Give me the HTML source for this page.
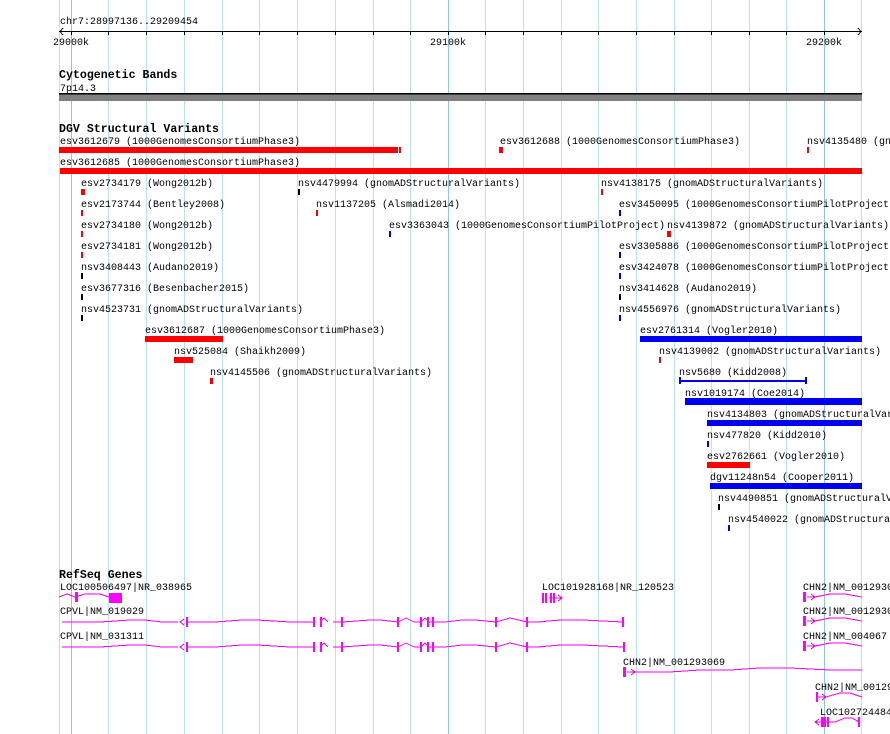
<!DOCTYPE html>
<html><head><meta charset="utf-8"><style>
html,body{margin:0;padding:0;background:#fff;width:890px;height:734px;overflow:hidden}
svg text{font-family:"Liberation Mono",monospace;font-size:10px;fill:#000}
svg text.h{font-weight:bold;font-size:11.6px}
</style></head><body>
<svg width="890" height="734" xmlns="http://www.w3.org/2000/svg" shape-rendering="crispEdges">
<g stroke="#b4e6ee" stroke-width="1">
<line x1="59.5" y1="0" x2="59.5" y2="734"/>
<line x1="108.5" y1="0" x2="108.5" y2="734"/><line x1="146.5" y1="0" x2="146.5" y2="734"/><line x1="184.5" y1="0" x2="184.5" y2="734"/><line x1="222.5" y1="0" x2="222.5" y2="734"/><line x1="259.5" y1="0" x2="259.5" y2="734"/><line x1="297.5" y1="0" x2="297.5" y2="734"/><line x1="335.5" y1="0" x2="335.5" y2="734"/><line x1="373.5" y1="0" x2="373.5" y2="734"/><line x1="410.5" y1="0" x2="410.5" y2="734"/>
<line x1="485.5" y1="0" x2="485.5" y2="734"/><line x1="523.5" y1="0" x2="523.5" y2="734"/><line x1="561.5" y1="0" x2="561.5" y2="734"/><line x1="598.5" y1="0" x2="598.5" y2="734"/><line x1="636.5" y1="0" x2="636.5" y2="734"/><line x1="674.5" y1="0" x2="674.5" y2="734"/><line x1="711.5" y1="0" x2="711.5" y2="734"/><line x1="749.5" y1="0" x2="749.5" y2="734"/><line x1="786.5" y1="0" x2="786.5" y2="734"/><line x1="861.5" y1="0" x2="861.5" y2="734"/>
</g>
<g stroke="#88c8e4"><line x1="71.5" y1="0" x2="71.5" y2="734"/><line x1="448.5" y1="0" x2="448.5" y2="734"/><line x1="824.5" y1="0" x2="824.5" y2="734"/></g>

<text x="60" y="24">chr7:28997136..29209454</text>
<g stroke="#000"><line x1="59" y1="31.5" x2="862" y2="31.5"/>
<polyline points="63,28 60,31.5 63,35" fill="none"/><polyline points="858,28 861,31.5 858,35" fill="none"/>
<path d="M71.5 31v4M108.5 31v4M146.5 31v4M184.5 31v4M222.5 31v4M259.5 31v4M297.5 31v4M335.5 31v4M373.5 31v4M410.5 31v4M448.5 31v4M485.5 31v4M523.5 31v4M561.5 31v4M598.5 31v4M636.5 31v4M674.5 31v4M711.5 31v4M749.5 31v4M786.5 31v4M824.5 31v4"/></g>
<text x="53" y="45">29000k</text><text x="430" y="45">29100k</text><text x="806" y="45">29200k</text>

<text class="h" x="59" y="78">Cytogenetic Bands</text>
<text x="60" y="91">7p14.3</text>
<rect x="59" y="93" width="803" height="8" fill="#808080"/><rect x="59" y="93" width="803" height="1.5" fill="#000"/>

<text class="h" x="59" y="132">DGV Structural Variants</text>
<g fill="#f00">
<rect x="59" y="147" width="339" height="6"/><rect x="399" y="147" width="2" height="6"/>
<rect x="499" y="147" width="4" height="6"/><rect x="807" y="147" width="2" height="6"/>
<rect x="60" y="168" width="802" height="6"/>
<rect x="81" y="189" width="4" height="6"/><rect x="601" y="189" width="2" height="6"/>
<rect x="81" y="210" width="2" height="6"/><rect x="316" y="210" width="2" height="6"/>
<rect x="81" y="231" width="2" height="6"/><rect x="667" y="231" width="4" height="6"/>
<rect x="81" y="252" width="2" height="6"/>
<rect x="145" y="336" width="78" height="6"/>
<rect x="174" y="357" width="19" height="6"/><rect x="659" y="357" width="2" height="6"/>
<rect x="210" y="378" width="3" height="6"/>
<rect x="707" y="462" width="43" height="6"/>
</g>
<g fill="#000">
<rect x="298" y="189" width="2" height="6"/><rect x="81" y="273" width="2" height="6"/><rect x="81" y="294" width="2" height="6"/><rect x="619" y="294" width="2" height="6"/><rect x="81" y="315" width="2" height="6"/><rect x="718" y="504" width="2" height="6"/>
</g>
<g fill="#0000f0">
<rect x="619" y="210" width="2" height="6"/><rect x="389" y="231" width="2" height="6"/><rect x="619" y="252" width="2" height="6"/><rect x="619" y="273" width="2" height="6"/><rect x="619" y="315" width="2" height="6"/>
<rect x="640" y="336" width="222" height="6"/>
<rect x="679" y="380" width="127" height="2"/><rect x="679" y="377" width="2" height="7"/><rect x="805" y="377" width="2" height="7"/>
<rect x="685" y="398" width="177" height="7"/>
<rect x="707" y="420" width="155" height="6"/>
<rect x="707" y="441" width="2" height="6"/>
<rect x="710" y="483" width="152" height="6"/>
<rect x="728" y="525" width="2" height="6"/>
</g>
<text x="60" y="144">esv3612679 (1000GenomesConsortiumPhase3)</text>
<text x="500" y="144">esv3612688 (1000GenomesConsortiumPhase3)</text>
<text x="807" y="144">nsv4135480 (gnomADStructuralVariants)</text>
<text x="60" y="165">esv3612685 (1000GenomesConsortiumPhase3)</text>
<text x="81" y="186">esv2734179 (Wong2012b)</text>
<text x="298" y="186">nsv4479994 (gnomADStructuralVariants)</text>
<text x="601" y="186">nsv4138175 (gnomADStructuralVariants)</text>
<text x="81" y="207">esv2173744 (Bentley2008)</text>
<text x="316" y="207">nsv1137205 (Alsmadi2014)</text>
<text x="619" y="207">esv3450095 (1000GenomesConsortiumPilotProject)</text>
<text x="81" y="228">esv2734180 (Wong2012b)</text>
<text x="389" y="228">esv3363043 (1000GenomesConsortiumPilotProject)</text>
<text x="667" y="228">nsv4139872 (gnomADStructuralVariants)</text>
<text x="81" y="249">esv2734181 (Wong2012b)</text>
<text x="619" y="249">esv3305886 (1000GenomesConsortiumPilotProject)</text>
<text x="81" y="270">nsv3408443 (Audano2019)</text>
<text x="619" y="270">esv3424078 (1000GenomesConsortiumPilotProject)</text>
<text x="81" y="291">esv3677316 (Besenbacher2015)</text>
<text x="619" y="291">nsv3414628 (Audano2019)</text>
<text x="81" y="312">nsv4523731 (gnomADStructuralVariants)</text>
<text x="619" y="312">nsv4556976 (gnomADStructuralVariants)</text>
<text x="145" y="333">esv3612687 (1000GenomesConsortiumPhase3)</text>
<text x="640" y="333">esv2761314 (Vogler2010)</text>
<text x="174" y="354">nsv525084 (Shaikh2009)</text>
<text x="659" y="354">nsv4139002 (gnomADStructuralVariants)</text>
<text x="210" y="375">nsv4145506 (gnomADStructuralVariants)</text>
<text x="679" y="375">nsv5680 (Kidd2008)</text>
<text x="685" y="396">nsv1019174 (Coe2014)</text>
<text x="707" y="417">nsv4134803 (gnomADStructuralVariants)</text>
<text x="707" y="438">nsv477820 (Kidd2010)</text>
<text x="707" y="459">esv2762661 (Vogler2010)</text>
<text x="710" y="480">dgv11248n54 (Cooper2011)</text>
<text x="718" y="501">nsv4490851 (gnomADStructuralVariants)</text>
<text x="728" y="522">nsv4540022 (gnomADStructuralVariants)</text>

<text class="h" x="59" y="578">RefSeq Genes</text>
<text x="60" y="590">LOC100506497|NR_038965</text>
<text x="60" y="614">CPVL|NM_019029</text>
<text x="60" y="639">CPVL|NM_031311</text>
<text x="542" y="590">LOC101928168|NR_120523</text>
<text x="623" y="665">CHN2|NM_001293069</text>
<text x="803" y="590">CHN2|NM_001293069</text>
<text x="803" y="614">CHN2|NM_001293070</text>
<text x="803" y="639">CHN2|NM_004067</text>
<text x="815" y="690">CHN2|NM_001293071</text>
<text x="820" y="715">LOC102724484</text>

<g stroke="#f0f" fill="none" stroke-width="1">
<polyline points="59,597 67,594 75,597 85,594 100,594 109,597"/>
<path d="M62 622H100L130 620H145L162 622H178M187 622H215L242 620H257L290 622H313M320 622L324 618 328 622M333 622H342M342 622L370 620H380L398 622L406 618 414 622H421L425 618 429 622H433M433 622H445L462 620H475L496 622L510 618 527 622H538L560 620H583L623 622"/>
<path d="M62 647H100L130 645H145L162 647H178M187 647H215L242 645H257L290 647H313M320 647L324 643 328 647M333 647H342M342 647L370 645H380L398 647L406 643 414 647H421L425 643 429 647H433M433 647H445L462 645H475L496 647L510 643 527 647H538L560 645H583L623 647"/>
<polyline points="184,619 180,622 184,625"/><polyline points="184,644 180,647 184,650"/>
<polyline points="549,598 561,598"/><polyline points="558,595 562,598 558,601"/>
<path d="M627 672H640M640 672H670L700 670H730L760 668H790L830 670H862"/><polyline points="631,669 635,672 631,675"/>
<path d="M807 597H815L830 594H845L862 597"/><polyline points="811,594 815,597 811,600"/>
<path d="M807 621H815L830 618H845L862 621"/><polyline points="811,618 815,621 811,624"/>
<path d="M807 646H815L830 643H845L862 646"/><polyline points="811,643 815,646 811,649"/>
<path d="M818 697H826L840 693H850L862 697"/><polyline points="822,694 826,697 822,700"/>
<path d="M815 722H828M829 722H835L845 718H852L859 722"/><polyline points="819,719 815,722 819,725"/>
</g>
<g fill="#f0f">
<rect x="75" y="592" width="3" height="10"/><rect x="109" y="593" width="13" height="10"/>
<rect x="186" y="617" width="2" height="10"/><rect x="313" y="617" width="2" height="10"/><rect x="320" y="617" width="2" height="10"/><rect x="341" y="617" width="2" height="10"/><rect x="397" y="617" width="2" height="10"/><rect x="420" y="617" width="2" height="10"/><rect x="427" y="617" width="2" height="10"/><rect x="432" y="617" width="2" height="10"/><rect x="495" y="617" width="2" height="10"/><rect x="526" y="617" width="2" height="10"/><rect x="622" y="617" width="2" height="10"/>
<rect x="186" y="642" width="2" height="10"/><rect x="313" y="642" width="2" height="10"/><rect x="320" y="642" width="2" height="10"/><rect x="341" y="642" width="2" height="10"/><rect x="397" y="642" width="2" height="10"/><rect x="420" y="642" width="2" height="10"/><rect x="427" y="642" width="2" height="10"/><rect x="432" y="642" width="2" height="10"/><rect x="495" y="642" width="2" height="10"/><rect x="526" y="642" width="2" height="10"/><rect x="623" y="642" width="2" height="10"/>
<rect x="542" y="593" width="2" height="10"/><rect x="545" y="593" width="2" height="10"/><rect x="550" y="593" width="2" height="10"/><rect x="553" y="593" width="2" height="10"/>
<rect x="623" y="667" width="3" height="10"/>
<rect x="803" y="592" width="3" height="10"/><rect x="803" y="616" width="3" height="10"/><rect x="803" y="641" width="3" height="10"/>
<rect x="816" y="692" width="2" height="10"/>
<rect x="821" y="717" width="5" height="10"/><rect x="827" y="717" width="2" height="10"/><rect x="858" y="717" width="2" height="10"/>
</g>
</svg>
</body></html>
